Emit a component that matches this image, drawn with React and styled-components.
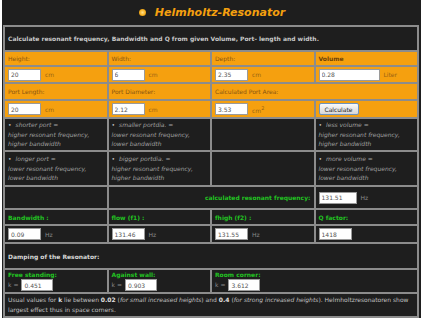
import React from "react";
import styled, { createGlobalStyle } from "styled-components";

const GlobalStyle = createGlobalStyle`
  body {
    margin: 0;
    background: #ffffff;
    font-family: "DejaVu Sans", Verdana, sans-serif;
  }
`;

const Page = styled.div`
  margin-left: 2px;
  width: 419px;
  padding-left: 1px;
  box-sizing: border-box;
  background: #1e1e1e;
`;

const Header = styled.div`
  height: 25px;
  display: flex;
  align-items: center;
  justify-content: center;
  gap: 9px;
`;

const Dot = styled.span`
  width: 7px;
  height: 7px;
  border-radius: 50%;
  background: radial-gradient(circle, #ffe08a 0, #f7b020 55%, #c07a00 100%);
`;

const Title = styled.h1`
  margin: 0;
  font: italic bold 11px "DejaVu Sans", Verdana, sans-serif;
  color: #f5a00f;
`;

const Grid = styled.table`
  width: 416px;
  table-layout: fixed;
  border-spacing: 2px;
  background: #8c8c8c;
  font-size: 6px;
`;

const Row = styled.tr`
  height: ${(p) => p.$h}px;
`;

const Cell = styled.td`
  padding: 0 3px;
  background: ${(p) => (p.$orange ? "#f5a00f" : "#1e1e1e")};
  color: ${(p) => (p.$orange ? "#8a5510" : "#a8a8a8")};
  text-align: ${(p) => p.$align || "left"};
  vertical-align: middle;
  overflow: hidden;
  white-space: nowrap;
`;

const Lead = styled(Cell)`
  color: #c8c8c8;
  font-weight: bold;
`;

const Strong = styled.span`
  font-weight: bold;
  color: #6e4208;
`;

const Green = styled.span`
  color: #22c322;
  font-weight: bold;
`;

const Heading = styled.span`
  color: #d8d8d8;
  font-weight: bold;
`;

const Field = styled.input`
  width: ${(p) => p.$w}px;
  height: 12px;
  box-sizing: border-box;
  border: 1px solid #9a9a9a;
  padding: 0 2px;
  margin: 0;
  font: 6px "DejaVu Sans", Verdana, sans-serif;
  color: #555;
  background: #fff;
  vertical-align: middle;
`;

const Unit = styled.span`
  margin-left: 4px;
  color: ${(p) => (p.$dark ? "#8a8a8a" : "#9a6414")};
  vertical-align: middle;
`;

const Button = styled.button`
  width: 40px;
  height: 12px;
  padding: 0;
  font: 6px "DejaVu Sans", Verdana, sans-serif;
  color: #222;
  background: linear-gradient(#fafafa, #d6d6d6);
  border: 1px solid #6d93bd;
  border-radius: 2px;
`;

const Note = styled.div`
  line-height: 9.5px;
  font-style: italic;
  color: #a0a0a0;
  white-space: normal;
`;

const Bullet = styled.span`
  font-style: normal;
  color: #bcbcbc;
  margin-right: 4px;
`;

const Stack = styled.div`
  display: flex;
  flex-direction: column;
  gap: 1px;
`;

const Small = styled.span`
  color: #8a8a8a;
  margin-right: 3px;
`;

const Paragraph = styled.div`
  white-space: normal;
  line-height: 10px;
  color: #c0c0c0;
  b { color: #e0e0e0; }
`;

function Input({ value, w = 33, unit, dark, sup }) {
  return (
    <>
      <Field $w={w} defaultValue={value} />
      {unit && (
        <Unit $dark={dark}>
          {unit}
          {sup && <sup>{sup}</sup>}
        </Unit>
      )}
    </>
  );
}

function Hint({ head, lines }) {
  return (
    <Note>
      <Bullet>•</Bullet>
      {head}
      <br />
      {lines[0]}
      <br />
      {lines[1]}
    </Note>
  );
}

function Damp({ label, value }) {
  return (
    <Stack>
      <Green>{label}</Green>
      <div>
        <Small>k =</Small>
        <Field $w={32} defaultValue={value} />
      </div>
    </Stack>
  );
}

export default function App() {
  return (
    <Page>
      <GlobalStyle />
      <Header>
        <Dot />
        <Title>Helmholtz-Resonator</Title>
      </Header>
      <Grid>
        <colgroup>
          <col />
          <col />
          <col />
          <col />
        </colgroup>
        <tbody>
          <Row $h={23}>
            <Lead colSpan={4}>
              Calculate resonant frequency, Bandwidth and Q from given Volume, Port- length and width.
            </Lead>
          </Row>
          <Row $h={13}>
            <Cell $orange>Height:</Cell>
            <Cell $orange>Width:</Cell>
            <Cell $orange>Depth:</Cell>
            <Cell $orange><Strong>Volume</Strong></Cell>
          </Row>
          <Row $h={15}>
            <Cell $orange><Input value="20" unit="cm" /></Cell>
            <Cell $orange><Input value="6" unit="cm" /></Cell>
            <Cell $orange><Input value="2.35" unit="cm" /></Cell>
            <Cell $orange><Input value="0.28" w={61} unit="Liter" /></Cell>
          </Row>
          <Row $h={15}>
            <Cell $orange>Port Length:</Cell>
            <Cell $orange>Port Diameter:</Cell>
            <Cell $orange colSpan={2}>Calculated Port Area:</Cell>
          </Row>
          <Row $h={16}>
            <Cell $orange><Input value="20" unit="cm" /></Cell>
            <Cell $orange><Input value="2.12" unit="cm" /></Cell>
            <Cell $orange><Input value="3.53" unit="cm" sup="2" /></Cell>
            <Cell $orange><Button>Calculate</Button></Cell>
          </Row>
          <Row $h={31}>
            <Cell><Hint head="shorter port =" lines={["higher resonant frequency,", "higher bandwidth"]} /></Cell>
            <Cell><Hint head="smaller portdia. =" lines={["lower resonant frequency,", "lower bandwidth"]} /></Cell>
            <Cell />
            <Cell><Hint head="less volume =" lines={["higher resonant frequency,", "higher bandwidth"]} /></Cell>
          </Row>
          <Row $h={33}>
            <Cell><Hint head="longer port =" lines={["lower resonant frequency,", "lower bandwidth"]} /></Cell>
            <Cell><Hint head="bigger portdia. =" lines={["higher resonant frequency,", "higher bandwidth"]} /></Cell>
            <Cell />
            <Cell><Hint head="more volume =" lines={["lower resonant frequency,", "lower bandwidth"]} /></Cell>
          </Row>
          <Row $h={21}>
            <Cell />
            <Cell colSpan={2} $align="right"><Green>calculated resonant frequency:</Green></Cell>
            <Cell><Input value="131.51" w={38} unit="Hz" dark /></Cell>
          </Row>
          <Row $h={14}>
            <Cell><Green>Bandwidth :</Green></Cell>
            <Cell><Green>flow (f1) :</Green></Cell>
            <Cell><Green>fhigh (f2) :</Green></Cell>
            <Cell><Green>Q factor:</Green></Cell>
          </Row>
          <Row $h={16}>
            <Cell><Input value="0.09" unit="Hz" dark /></Cell>
            <Cell><Input value="131.46" unit="Hz" dark /></Cell>
            <Cell><Input value="131.55" unit="Hz" dark /></Cell>
            <Cell><Input value="1418" /></Cell>
          </Row>
          <Row $h={24}>
            <Cell colSpan={4}><Heading>Damping of the Resonator:</Heading></Cell>
          </Row>
          <Row $h={22}>
            <Cell><Damp label="Free standing:" value="0.451" /></Cell>
            <Cell><Damp label="Against wall:" value="0.903" /></Cell>
            <Cell colSpan={2}><Damp label="Room corner:" value="3.612" /></Cell>
          </Row>
          <Row $h={22}>
            <Cell colSpan={4}>
              <Paragraph>
                Usual values for <b>k</b> lie between <b>0.02</b> (<i>for small increased heights</i>) and{" "}
                <b>0.4</b> (<i>for strong increased heights</i>). Helmholtzresonatoren show largest effect thus in
                space corners.
              </Paragraph>
            </Cell>
          </Row>
        </tbody>
      </Grid>
    </Page>
  );
}
